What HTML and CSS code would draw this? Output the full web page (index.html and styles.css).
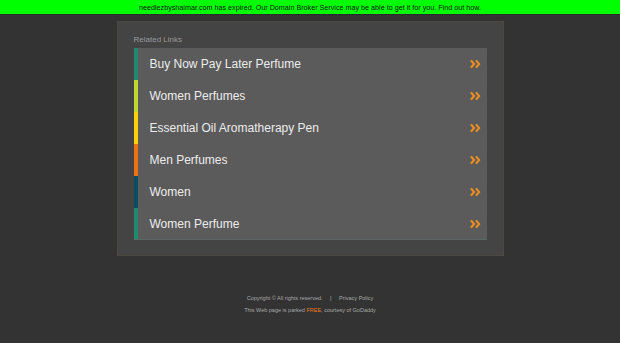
FILE: index.html
```html
<!DOCTYPE html>
<html lang="en">
<head>
    <meta charset="UTF-8">
    <title>needlezbyshalmar.com</title>
    <link rel="stylesheet" href="styles.css">
</head>
<body>
    <div class="notice">
        needlezbyshalmar.com has expired. Our Domain Broker Service may be able to get it for you. Find out how.
    </div>

    <div class="panel">
        <div class="panel-title">Related Links</div>
        <ul class="links">
            <li class="c1"><span>Buy Now Pay Later Perfume</span><svg class="arrow" viewBox="0 0 12 10"><path d="M1 1l3.5 4L1 9M6.5 1l3.5 4-3.5 4"/></svg></li>
            <li class="c2"><span>Women Perfumes</span><svg class="arrow" viewBox="0 0 12 10"><path d="M1 1l3.5 4L1 9M6.5 1l3.5 4-3.5 4"/></svg></li>
            <li class="c3"><span>Essential Oil Aromatherapy Pen</span><svg class="arrow" viewBox="0 0 12 10"><path d="M1 1l3.5 4L1 9M6.5 1l3.5 4-3.5 4"/></svg></li>
            <li class="c4"><span>Men Perfumes</span><svg class="arrow" viewBox="0 0 12 10"><path d="M1 1l3.5 4L1 9M6.5 1l3.5 4-3.5 4"/></svg></li>
            <li class="c5"><span>Women</span><svg class="arrow" viewBox="0 0 12 10"><path d="M1 1l3.5 4L1 9M6.5 1l3.5 4-3.5 4"/></svg></li>
            <li class="c6"><span>Women Perfume</span><svg class="arrow" viewBox="0 0 12 10"><path d="M1 1l3.5 4L1 9M6.5 1l3.5 4-3.5 4"/></svg></li>
        </ul>
    </div>

    <div class="footer">
        <div>Copyright &copy; All rights reserved. <span class="sep">|</span> Privacy Policy</div>
        <div>This Web page is parked <span class="free">FREE</span>, courtesy of GoDaddy</div>
    </div>
</body>
</html>
```

FILE: styles.css
```css
body {
    margin: 0;
    background-color: #333333;
    font-family: "Liberation Sans", Arial, sans-serif;
}

/* top notice bar */
.notice {
    height: 14px;
    line-height: 15px;
    background-color: #00ff00;
    border-bottom: 1px solid #2b2b2b;
    color: #111;
    font-size: 7.2px;
    text-align: center;
}

/* related links box */
.panel {
    width: 353px;
    margin: 6px auto 0;
    padding: 12px 16px 15px;
    background-color: #444444;
    border: 1px solid #4c4843;
}
.panel-title {
    height: 14px;
    color: #9a9a9a;
    font-size: 8px;
    line-height: 12px;
}
.links {
    list-style: none;
    margin: 0;
    padding: 0;
    background-color: #5b5b5b;
    border-bottom: 1px solid #5f6868;
}
.links li {
    display: flex;
    align-items: center;
    justify-content: space-between;
    height: 32px;
    padding: 0 6px 0 12px;
    border-left: 4px solid #1f8a70;
    color: #ececec;
    font-size: 12px;
}
.links li.c2 { border-left-color: #bed62f; }
.links li.c3 { border-left-color: #f7d20a; }
.links li.c4 { border-left-color: #ec7112; }
.links li.c5 { border-left-color: #0a4d61; }
.links li.c6 { border-left-color: #1f8a70; }
.links li:last-child { height: 31px; }

.arrow {
    width: 11px;
    height: 10px;
    fill: none;
    stroke: #f0901f;
    stroke-width: 2.2;
}

/* footer */
.footer {
    margin-top: 36px;
    color: #a8a8a8;
    font-size: 5.5px;
    text-align: center;
    line-height: 12px;
}
.footer .sep {
    padding: 0 6px;
}
.footer .free {
    color: #f07a1a;
}
```
